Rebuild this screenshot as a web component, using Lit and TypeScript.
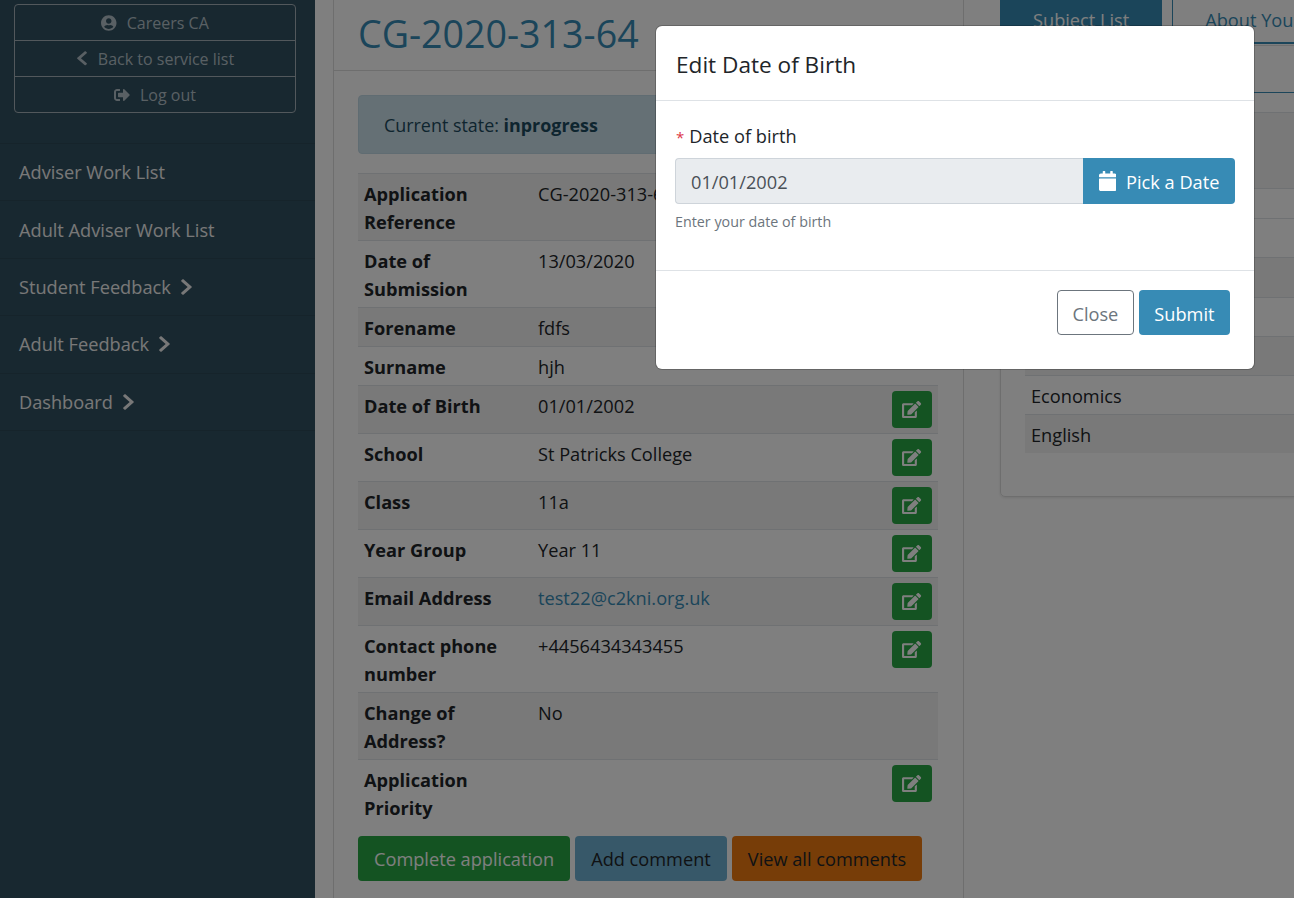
import { LitElement, html, css, svg } from "lit";
import { customElement } from "lit/decorators.js";

const P = {
  user: ["0 0 496 512", "M248 8C111 8 0 119 0 256s111 248 248 248 248-111 248-248S385 8 248 8zm0 96c48.6 0 88 39.4 88 88s-39.4 88-88 88-88-39.4-88-88 39.4-88 88-88zm0 344c-58.7 0-111.3-26.6-146.5-68.2 18.8-35.4 55.6-59.8 98.5-59.8 2.4 0 4.8.4 7.1 1.1 13 4.2 26.6 6.9 40.9 6.9 14.3 0 28-2.7 40.9-6.9 2.3-.7 4.7-1.1 7.1-1.1 42.9 0 79.7 24.4 98.5 59.8C359.3 421.4 306.7 448 248 448z"],
  left: ["0 0 320 512", "M34.52 239.03L228.87 44.69c9.37-9.37 24.57-9.37 33.94 0l22.67 22.67c9.36 9.36 9.37 24.52.04 33.9L131.49 256l154.02 154.75c9.34 9.38 9.32 24.54-.04 33.9l-22.67 22.67c-9.37 9.37-24.57 9.37-33.94 0L34.52 272.97c-9.37-9.37-9.37-24.57 0-33.94z"],
  right: ["0 0 320 512", "M285.476 272.971L91.132 467.314c-9.373 9.373-24.569 9.373-33.941 0l-22.667-22.667c-9.357-9.357-9.375-24.522-.04-33.901L188.505 256 34.484 101.255c-9.335-9.379-9.317-24.544.04-33.901l22.667-22.667c9.373-9.373 24.569-9.373 33.941 0L285.475 239.03c9.373 9.372 9.373 24.568.001 33.941z"],
  out: ["0 0 512 512", "M497 273L329 441c-15 15-41 4.5-41-17v-96H152c-13.3 0-24-10.7-24-24v-96c0-13.3 10.7-24 24-24h136V88c0-21.4 25.9-32 41-17l168 168c9.3 9.4 9.3 24.6 0 34zM192 436v-40c0-6.6-5.4-12-12-12H96c-17.7 0-32-14.3-32-32V160c0-17.7 14.3-32 32-32h84c6.6 0 12-5.4 12-12V76c0-6.6-5.4-12-12-12H96c-53 0-96 43-96 96v192c0 53 43 96 96 96h84c6.6 0 12-5.4 12-12z"],
  edit: ["0 0 576 512", "M402.6 83.2l90.2 90.2c3.8 3.8 3.8 10 0 13.8L274.4 405.6l-92.8 10.3c-12.4 1.4-22.9-9.1-21.5-21.5l10.3-92.8L388.8 83.2c3.8-3.8 10-3.8 13.8 0zm162-22.9l-48.8-48.8c-15.2-15.2-39.9-15.2-55.2 0l-35.4 35.4c-3.8 3.8-3.8 10 0 13.8l90.2 90.2c3.8 3.8 10 3.8 13.8 0l35.4-35.4c15.2-15.3 15.2-40 0-55.2zM384 346.2V448H64V128h229.8c3.2 0 6.2-1.3 8.5-3.5l40-40c7.6-7.6 2.2-20.5-8.5-20.5H48C21.5 64 0 85.5 0 112v352c0 26.5 21.5 48 48 48h352c26.5 0 48-21.5 48-48V306.2c0-10.7-12.9-16-20.5-8.5l-40 40c-2.2 2.3-3.5 5.3-3.5 8.5z"],
  cal: ["0 0 448 512", "M12 192h424c6.6 0 12 5.4 12 12v260c0 26.5-21.5 48-48 48H48c-26.5 0-48-21.5-48-48V204c0-6.6 5.4-12 12-12zm436-44v-36c0-26.5-21.5-48-48-48h-48V12c0-6.6-5.4-12-12-12h-40c-6.6 0-12 5.4-12 12v52H160V12c0-6.6-5.4-12-12-12h-40c-6.6 0-12 5.4-12 12v52H48C21.5 64 0 85.5 0 112v36c0 6.6 5.4 12 12 12h424c6.6 0 12-5.4 12-12z"],
};
const icon = (k: keyof typeof P, cls = "") =>
  html`<svg class="ic ${cls}" viewBox=${P[k][0]} preserveAspectRatio=${cls === "chev" ? "none" : "xMidYMid meet"} fill="currentColor">${svg`<path d=${P[k][1]}></path>`}</svg>`;

const ROWS: { k: string; v?: string; edit?: boolean; link?: boolean }[] = [
  { k: "Application Reference", v: "CG-2020-313-64" },
  { k: "Date of Submission", v: "13/03/2020" },
  { k: "Forename", v: "fdfs" },
  { k: "Surname", v: "hjh" },
  { k: "Date of Birth", v: "01/01/2002", edit: true },
  { k: "School", v: "St Patricks College", edit: true },
  { k: "Class", v: "11a", edit: true },
  { k: "Year Group", v: "Year 11", edit: true },
  { k: "Email Address", v: "test22@c2kni.org.uk", edit: true, link: true },
  { k: "Contact phone number", v: "+4456434343455", edit: true },
  { k: "Change of Address?", v: "No" },
  { k: "Application Priority", edit: true },
];

const SUBJECTS: { h: number; s: boolean; t?: string }[] = [
  { h: 76, s: true },
  { h: 30, s: false },
  { h: 39, s: false },
  { h: 40, s: true },
  { h: 39, s: false },
  { h: 39, s: true },
  { h: 39, s: false, t: "Economics" },
  { h: 39, s: true, t: "English" },
];

@customElement("app-root")
export class AppRoot extends LitElement {
  static styles = css`
    :host {
      display: block;
      position: relative;
      height: 898px;
      overflow: hidden;
      background: #fff;
      font-family: "Open Sans", "Noto Sans", sans-serif;
      font-size: 18.2px;
      line-height: 28px;
      color: #212529;
    }
    .page { display: flex; height: 898px; }
    .ic { display: block; height: 1em; flex: none; }

    .side { flex: 0 0 315px; box-sizing: border-box; background: #315060; padding-top: 4px; color: #fff; }
    .ubox { margin: 0 19px 0 14px; border: 1px solid #a4b0b8; border-radius: 4px; }
    .urow {
      display: flex; align-items: center; justify-content: center; gap: 10px;
      height: 35px; color: #b3c0c8; font-size: 16px; line-height: 24px;
    }
    .urow + .urow { border-top: 1px solid #a4b0b8; }
    .urow .ic { height: 16px; }
    .urow .ic.chev { height: 16.5px; width: 12px; }
    .nav { margin-top: 30px; border-bottom: 1px solid #2c4957; }
    .item {
      display: flex; align-items: center; gap: 9px; box-sizing: border-box;
      height: 57.4px; padding: 0 19px; border-top: 1px solid #2c4957; color: #f0f0f0;
    }
    .item .ic.chev { height: 18px; width: 13px; }

    .gutter { flex: 0 0 18px; background: #fff; }
    .mid { flex: 0 0 629px; border-left: 1px solid #ddd; border-right: 1px solid #ddd; }
    .head { height: 71px; box-sizing: border-box; border-bottom: 1px solid #ddd; padding-left: 24px; }
    h1 { margin: 0; font-size: 37.6px; font-weight: 400; line-height: 68px; color: #378bb5; }
    .content { padding: 24px 25px 0 24px; }
    .alert {
      height: 59px; box-sizing: border-box; padding-left: 25px; display: flex; align-items: center;
      background: #cbe0ea; border: 1px solid #c0d8e4; border-radius: 4px; color: #1d4a5e;
      margin-bottom: 19px; white-space: pre; font-size: 17.9px;
    }
    .alert b { font-weight: 700; }
    .row { display: flex; border-top: 1px solid #dee2e6; padding: 6px 6px 4px; }
    .row.alt { background: #f2f2f2; }
    .row .k { flex: 0 0 174px; font-weight: 700; padding-right: 30px; box-sizing: border-box; }
    .row .v { flex: 1; min-width: 0; }
    .row .v a { color: #378bb5; text-decoration: none; }
    .edit {
      flex: none; width: 40px; height: 37px; margin: -1px 0 1px; display: flex; align-items: center; justify-content: center;
      background: #28a745; color: #fff; border-radius: 4px;
    }
    .edit .ic { height: 17px; }
    .actions { display: flex; gap: 5px; margin-top: 10px; }
    .btn { height: 45px; display: flex; align-items: center; padding: 0 16px; border-radius: 4px; box-sizing: border-box; }
    .green { background: #28a745; color: #fff; }
    .blue { background: #6fb0d2; color: #212529; }
    .orange { background: #ef7a10; color: #212529; }

    .right { flex: 1; min-width: 0; padding-left: 36px; overflow: hidden; }
    .tabs { display: flex; gap: 10px; height: 44px; }
    .tab { height: 44px; box-sizing: border-box; padding: 6px 33px 0; white-space: nowrap; }
    .tab.on { background: #378bb5; color: #fff; }
    .tab.off { border-left: 1px solid #378bb5; border-bottom: 2px solid #378bb5; color: #378bb5; flex: 1; padding-left: 32px; }
    .card {
      margin-top: 1px; width: 400px; height: 452px; box-sizing: border-box;
      border: 1px solid #ddd; border-radius: 0 0 0 5px; box-shadow: 0 1px 3px rgba(0,0,0,.1);
    }
    .chead { height: 46px; border-bottom: 1px solid #378bb5; }
    .stable { margin: 19px 0 0 24px; }
    .srow { border-top: 1px solid #dee2e6; padding: 2px 0 0 6px; box-sizing: border-box; display: flex; align-items: center; }
    .srow.alt { background: #f2f2f2; }

    .backdrop { position: absolute; inset: 0; background: rgba(0,0,0,.5); }
    .modal {
      position: absolute; left: 656px; top: 26px; width: 598px; height: 343px; box-sizing: border-box;
      background: #fff; border-radius: 6px; display: flex; flex-direction: column;
      box-shadow: 0 0 0 1px rgba(0,0,0,.2);
    }
    .mhead { height: 75px; flex: none; box-sizing: border-box; border-bottom: 1px solid #dee2e6; padding: 4px 20px 0; display: flex; align-items: center; }
    .mhead h2 { margin: 0; font-size: 22.6px; font-weight: 400; line-height: 28px; color: #212529; }
    .mbody { height: 170px; flex: none; box-sizing: border-box; border-bottom: 1px solid #dee2e6; padding: 21px 19px 0; }
    .label { line-height: 28px; margin-left: 1px; margin-bottom: 7px; }
    .label i { font-style: normal; color: #dc3545; font-size: 15px; margin-right: 5px; }
    .group { display: flex; height: 46px; }
    .input {
      flex: 1; box-sizing: border-box; background: #e9ecef; border: 1px solid #ced4da; border-right: 0;
      border-radius: 4px 0 0 4px; padding: 2px 0 0 15px; display: flex; align-items: center; color: #495057;
    }
    .pick {
      flex: 0 0 152px; box-sizing: border-box; background: #378bb5; color: #fff; border-radius: 0 4px 4px 0;
      padding-top: 2px; display: flex; align-items: center; justify-content: center; gap: 10px;
    }
    .pick .ic { height: 20px; margin-top: -2px; }
    .help { font-size: 14.3px; line-height: 20px; color: #6c757d; margin: 8px 0 0 0; }
    .mfoot { flex: 1; display: flex; justify-content: flex-end; gap: 5px; padding: 19px 24px 0 0; }
    .close { border: 1px solid #6c757d; color: #6c757d; background: #fff; padding: 2px 14.5px 0; }
    .submit { background: #378bb5; color: #fff; padding: 2px 15.5px 0; }
  `;

  render() {
    const nav: [string, boolean][] = [
      ["Adviser Work List", false],
      ["Adult Adviser Work List", false],
      ["Student Feedback", true],
      ["Adult Feedback", true],
      ["Dashboard", true],
    ];
    return html`
      <div class="page">
        <aside class="side">
          <div class="ubox">
            <div class="urow">${icon("user")}<span>Careers CA</span></div>
            <div class="urow">${icon("left", "chev")}<span>Back to service list</span></div>
            <div class="urow">${icon("out")}<span>Log out</span></div>
          </div>
          <nav class="nav">
            ${nav.map(([t, c]) => html`<div class="item"><span>${t}</span>${c ? icon("right", "chev") : ""}</div>`)}
          </nav>
        </aside>
        <div class="gutter"></div>
        <main class="mid">
          <div class="head"><h1>CG-2020-313-64</h1></div>
          <div class="content">
            <div class="alert">Current state: <b>inprogress</b></div>
            ${ROWS.map((r, i) => html`
              <div class="row ${i % 2 ? "" : "alt"}">
                <div class="k">${r.k}</div>
                <div class="v">${r.link ? html`<a>${r.v}</a>` : r.v}</div>
                ${r.edit ? html`<div class="edit">${icon("edit")}</div>` : ""}
              </div>`)}
            <div class="actions">
              <div class="btn green">Complete application</div>
              <div class="btn blue">Add comment</div>
              <div class="btn orange">View all comments</div>
            </div>
          </div>
        </main>
        <section class="right">
          <div class="tabs">
            <div class="tab on">Subject List</div>
            <div class="tab off">About You</div>
          </div>
          <div class="card">
            <div class="chead"></div>
            <div class="stable">
              ${SUBJECTS.map((s) => html`<div class="srow ${s.s ? "alt" : ""}" style="height:${s.h}px">${s.t ?? ""}</div>`)}
            </div>
          </div>
        </section>
      </div>
      <div class="backdrop"></div>
      <div class="modal">
        <div class="mhead"><h2>Edit Date of Birth</h2></div>
        <div class="mbody">
          <div class="label"><i>*</i>Date of birth</div>
          <div class="group">
            <div class="input">01/01/2002</div>
            <div class="pick">${icon("cal")}<span>Pick a Date</span></div>
          </div>
          <div class="help">Enter your date of birth</div>
        </div>
        <div class="mfoot">
          <div class="btn close">Close</div>
          <div class="btn submit">Submit</div>
        </div>
      </div>
    `;
  }
}
